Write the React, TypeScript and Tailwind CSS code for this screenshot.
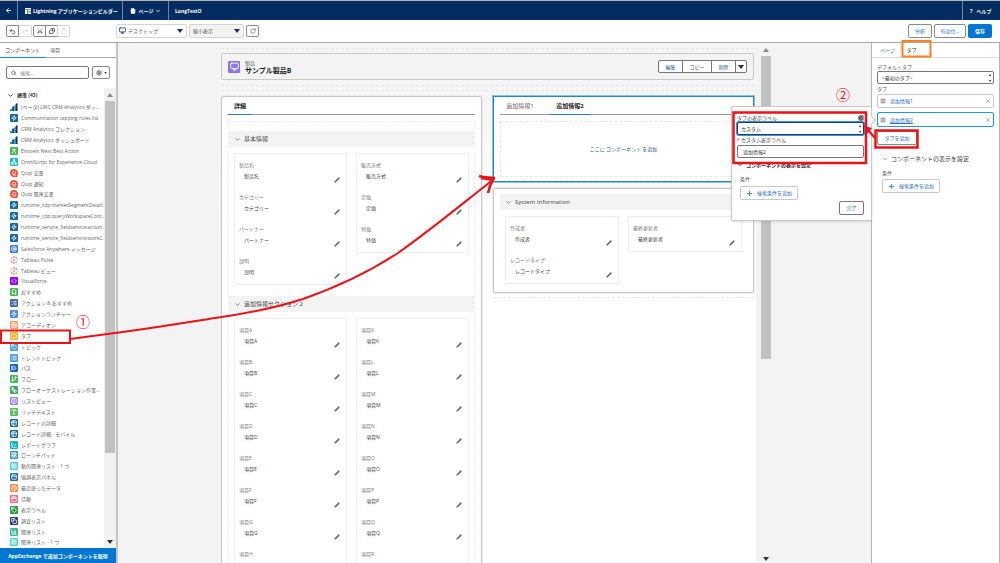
import type { ReactNode } from 'react';
import {
  ArrowLeft,
  AtSign,
  BarChart3,
  Bookmark,
  Calendar,
  ChevronDown,
  Clipboard,
  Clock,
  Code,
  Columns2,
  Copy,
  FileText,
  Folder,
  GitBranch,
  Info,
  LayoutGrid,
  LayoutList,
  LineChart,
  List,
  ListChecks,
  Menu,
  Monitor,
  Network,
  PanelTop,
  Pencil,
  Plus,
  Redo2,
  RotateCw,
  Rows3,
  Scissors,
  Search,
  Settings,
  StepForward,
  Table2,
  Tag,
  Type,
  Undo2,
  User,
  Workflow,
  X,
  Zap,
  type LucideIcon,
} from 'lucide-react';

type Component = {
  label: string;
  color: string;
  icon?: LucideIcon;
  shape?: 'bars' | 'quip' | 'tableau';
};

const components: Component[] = [
  { label: '(ベータ) LWC CRM Analytics ダッ...', color: '', shape: 'bars' },
  { label: 'Communication capping rules list', color: 'bg-[#16699c]', icon: Zap },
  { label: 'CRM Analytics コレクション', color: '', shape: 'bars' },
  { label: 'CRM Analytics ダッシュボード', color: '', shape: 'bars' },
  { label: 'Einstein Next Best Action', color: 'bg-[#4bb35b]', icon: User },
  { label: 'OmniScript for Experience Cloud', color: 'bg-[#20b8cf]', icon: Network },
  { label: 'Quip 文書', color: '', shape: 'quip' },
  { label: 'Quip 通知', color: '', shape: 'quip' },
  { label: 'Quip 関連文書', color: '', shape: 'quip' },
  { label: 'runtime_cdp:marketSegmentDetail...', color: 'bg-[#16699c]', icon: Zap },
  { label: 'runtime_cdp:queryWorkspaceCont...', color: 'bg-[#16699c]', icon: Zap },
  { label: 'runtime_service_fieldservice:action...', color: 'bg-[#16699c]', icon: Zap },
  { label: 'runtime_service_fieldservice:workC...', color: 'bg-[#16699c]', icon: Zap },
  { label: 'Salesforce Anywhere メッセージ', color: 'bg-[#3f7fe0]', icon: AtSign },
  { label: 'Tableau Pulse', color: '', shape: 'tableau' },
  { label: 'Tableau ビュー', color: '', shape: 'tableau' },
  { label: 'Visualforce', color: 'bg-[#9209f0]', icon: Code },
  { label: 'おすすめ', color: 'bg-[#4bb35b]', icon: Bookmark },
  { label: 'アクション & おすすめ', color: 'bg-[#4a66a0]', icon: ListChecks },
  { label: 'アクションランチャー', color: 'bg-[#4f8ee0]', icon: Zap },
  { label: 'アコーディオン', color: 'bg-[#fb9a5c]', icon: Rows3 },
  { label: 'タブ', color: 'bg-[#f7ac2c]', icon: Folder },
  { label: 'トピック', color: 'bg-[#4a9fd8]', icon: Tag },
  { label: 'トレンドトピック', color: 'bg-[#4a9fd8]', icon: List },
  { label: 'パス', color: 'bg-[#0b66c5]', icon: StepForward },
  { label: 'フロー', color: 'bg-[#4bb35b]', icon: GitBranch },
  { label: 'フローオーケストレーション作業...', color: 'bg-[#3fa862]', icon: Workflow },
  { label: 'リストビュー', color: 'bg-[#8f86e8]', icon: Columns2 },
  { label: 'リッチテキスト', color: 'bg-[#5bbd5f]', icon: Type },
  { label: 'レコードの詳細', color: 'bg-[#16699c]', icon: Table2 },
  { label: 'レコード詳細 - モバイル', color: 'bg-[#16699c]', icon: Table2 },
  { label: 'レポートグラフ', color: 'bg-[#12b5bb]', icon: LineChart },
  { label: 'ローンチパッド', color: 'bg-[#3a8ee0]', icon: LayoutGrid },
  { label: '動的関連リスト - 1 つ', color: 'bg-[#4dd0d8]', icon: LayoutList },
  { label: '強調表示パネル', color: 'bg-[#1f6fa5]', icon: PanelTop },
  { label: '最近使ったデータ', color: 'bg-[#fb8f45]', icon: Clock },
  { label: '活動', color: 'bg-[#ee6a88]', icon: Calendar },
  { label: '表示ラベル', color: 'bg-[#2a9d4a]', icon: Tag },
  { label: '調査リスト', color: 'bg-[#2f4069]', icon: Copy },
  { label: '関連リスト', color: 'bg-[#3fb59a]', icon: BarChart3 },
  { label: '関連リスト - 1 つ', color: 'bg-[#4dd0d8]', icon: LayoutList },
];

const basicLeft = ['製品名', 'カテゴリー', 'パートナー', '説明'];
const basicRight = ['販売方式', '定価', '特価'];
const extraLeft = ['項目A', '項目B', '項目C', '項目D', '項目E', '項目F', '項目G'];
const extraRight = ['項目K', '項目L', '項目M', '項目N', '項目O', '項目P', '項目Q'];

function ComponentIcon({ item }: { item: Component }) {
  if (item.shape === 'bars') {
    return (
      <svg viewBox="0 0 8 8" className="size-2 shrink-0">
        <path d="M0 6h2v2H0z" fill="#1a9bd7" />
        <path d="M2 4l2-1v5H2z" fill="#0d5c9c" />
        <path d="M4.300 2.500h1.300V8H4.300z" fill="#1577b8" />
        <path d="M5.600 1l1.900-1v8H5.600z" fill="#0b2f66" />
      </svg>
    );
  }
  if (item.shape === 'quip') {
    return (
      <svg viewBox="0 0 8 8" className="size-2 shrink-0">
        <path d="M4 0a4 4 0 1 0 0 8h3.500V6A4 4 0 0 0 4 0z" fill="#f0523a" />
        <path d="M2.300 5V4a1.700 1.700 0 0 1 3.400 0v1zM3 6.200h2.800" fill="none" stroke="#fff" strokeWidth=".7" />
      </svg>
    );
  }
  if (item.shape === 'tableau') {
    return (
      <svg viewBox="0 0 8 8" className="size-2 shrink-0" fill="none" strokeWidth=".7">
        <path d="M4 2.800v2.400M2.800 4h2.400" stroke="#e8762c" />
        <path d="M4 .2v1.600M3.200 1h1.600M6.200 1.200v1.600M5.400 2h1.600" stroke="#6b84a8" />
        <path d="M1.800 1.200v1.600M1 2h1.600M6.200 5.200v1.600M5.400 6h1.600" stroke="#e39a4c" />
        <path d="M4 6.200v1.600M3.200 7h1.600M1.800 5.200v1.600M1 6h1.600" stroke="#c0698c" />
        <path d="M.5 3.500v1M7.500 3.500v1" stroke="#8193b5" />
      </svg>
    );
  }
  const Icon = item.icon!;
  return (
    <span className={`flex size-2 shrink-0 items-center justify-center rounded-[1px] text-white ${item.color}`}>
      <Icon size={6} strokeWidth={3} />
    </span>
  );
}

function Triangle({ up = false, className }: { up?: boolean; className: string }) {
  return (
    <svg viewBox="0 0 6 4" className={`h-1 w-1.5 ${className}`} fill="currentColor">
      <path d={up ? 'M3 0l3 4H0z' : 'M3 4L0 0h6z'} />
    </svg>
  );
}

function Stepper() {
  return (
    <svg viewBox="0 0 4 8" className="pointer-events-none absolute top-1/2 right-0.5 h-2 w-1 -translate-y-1/2 text-[#444]" fill="currentColor">
      <path d="M2 0l1.300 2H.7zM2 8L.7 6h2.600z" />
    </svg>
  );
}

function Field({ name }: { name: string }) {
  return (
    <div className="flex h-8 items-start justify-between pt-1.5 pr-1.5 pl-1">
      <dl>
        <dt className="leading-[8px] text-[#777]">{name}</dt>
        <dd className="mt-[3px] pl-[5px] leading-[8px] text-[#444]">{name}</dd>
      </dl>
      <button aria-label={`${name}を編集`} className="mt-4 text-[#666]">
        <Pencil size={6} fill="currentColor" strokeWidth={1} />
      </button>
    </div>
  );
}

function FieldCard({ fields, next }: { fields: string[]; next?: string }) {
  return (
    <div className="flex-1 self-start border border-[#e8eef2] bg-white py-px">
      {fields.map((name) => (
        <Field key={name} name={name} />
      ))}
      {next && <div className="h-8 pt-1.5 pl-1 text-[#777]">{next}</div>}
    </div>
  );
}

type SectionProps = { title: string; left: string[]; right: string[]; nextLeft?: string; nextRight?: string };

function Section({ title, left, right, nextLeft, nextRight }: SectionProps) {
  return (
    <section>
      <h2 className="flex h-4 items-center gap-[3px] bg-[#f3f3f3] pl-[5px] text-[6px] text-[#444]">
        <ChevronDown size={7} />
        {title}
      </h2>
      <div className="flex gap-[9px] px-[5px] pt-1.5">
        <FieldCard fields={left} next={nextLeft} />
        <FieldCard fields={right} next={nextRight} />
      </div>
    </section>
  );
}

function ToolButton({ label, muted = false, className = '', children }: { label: string; muted?: boolean; className?: string; children: ReactNode }) {
  return (
    <button
      aria-label={label}
      className={`flex h-3 w-[13px] items-center justify-center border ${muted ? 'border-[#d5d5d5] text-[#c9c9c9]' : 'border-[#8a8a8a] text-[#444]'} ${className}`}
    >
      {children}
    </button>
  );
}

function AddFilterButton() {
  return (
    <button className="flex h-3.5 w-[58px] items-center justify-center gap-1 rounded-[2px] border border-[#c9c9c9] bg-white text-[#2a6fc4]">
      <Plus size={7} strokeWidth={4} className="text-[#3a93dd]" />
      検索条件を追加
    </button>
  );
}

function Header() {
  return (
    <header className="flex h-5 shrink-0 items-stretch border-t border-[#b5b5b5] bg-[#032d60] font-bold text-white">
      <a href="#back" aria-label="戻る" className="flex w-[18px] items-center justify-center border-r border-[#6f86a5]">
        <ArrowLeft size={7} strokeWidth={3} />
      </a>
      <div className="flex w-[105px] items-center gap-0.5 border-r border-[#6f86a5] pl-[7px] whitespace-nowrap">
        <svg viewBox="0 0 6 6" className="size-1.5" fill="#fff">
          <path d="M0 0h6v1.400H0zM0 2h2.400v4H0zM3 2h3v1.600H3zM3 4.200h3V6H3z" />
        </svg>
        Lightning アプリケーションビルダー
      </div>
      <button className="flex w-[46px] items-center justify-center gap-0.5 border-r border-[#6f86a5]">
        <FileText size={6} fill="#fff" />
        <span className="ml-px">ページ</span>
        <ChevronDown size={6} strokeWidth={3} />
      </button>
      <div className="flex flex-1 items-center pl-1.5">LongTestO</div>
      <a href="#help" className="flex w-[38px] items-center gap-1 border-l border-[#6f86a5] pl-[7px]">
        <span>?</span>
        <span>ヘルプ</span>
      </a>
    </header>
  );
}

function Toolbar() {
  return (
    <div className="flex h-[23px] shrink-0 items-center border-b border-[#a8a8a8] bg-white pr-2 pl-1.5">
      <div className="flex w-[110px] gap-px">
        <div className="flex">
          <ToolButton label="元に戻す" className="rounded-l-[2px]"><Undo2 size={7} strokeWidth={2.500} /></ToolButton>
          <ToolButton label="やり直す" muted className="rounded-r-[2px] border-l-0"><Redo2 size={7} /></ToolButton>
        </div>
        <div className="flex">
          <ToolButton label="切り取り" className="rounded-l-[2px]"><Scissors size={6} className="-rotate-90" /></ToolButton>
          <ToolButton label="コピー" className="-ml-px"><Copy size={6} strokeWidth={3} className="-scale-x-100" /></ToolButton>
          <ToolButton label="貼り付け" muted className="-ml-px rounded-r-[2px]"><Clipboard size={6} /></ToolButton>
        </div>
      </div>
      <div className="flex flex-1 items-center gap-0.5">
        <div className="relative">
          <Monitor size={7} strokeWidth={3} className="pointer-events-none absolute top-[3px] left-[3px] text-[#1c4a80]" />
          <select aria-label="デバイス" className="h-3.5 w-[71px] appearance-none rounded-[2px] border border-[#d5d5d5] bg-white pl-[11px] text-[#555]">
            <option>デスクトップ</option>
          </select>
          <Triangle className="pointer-events-none absolute top-[5px] right-1 text-[#16325c]" />
        </div>
        <div className="relative">
          <select aria-label="表示倍率" className="h-3.5 w-[55px] appearance-none rounded-[2px] border border-[#d5d5d5] bg-[#f3f3f3] pl-[3px] text-[#555]">
            <option>縮小表示</option>
          </select>
          <Triangle className="pointer-events-none absolute top-[5px] right-1 text-[#16325c]" />
        </div>
        <ToolButton label="更新" className="rounded-[2px]"><RotateCw size={6} /></ToolButton>
      </div>
      <div className="flex gap-0.5">
        <button className="h-3.5 w-6 rounded-[2px] border border-[#8a8a8a] text-[#2a6fc4]">分析</button>
        <button className="h-3.5 w-8 rounded-[2px] border border-[#8a8a8a] text-[#2a6fc4]">有効化...</button>
        <button className="h-3.5 w-6 rounded-[2px] bg-[#0176d3] font-bold text-white">保存</button>
      </div>
    </div>
  );
}

function Sidebar() {
  return (
    <aside className="flex w-[118px] shrink-0 flex-col border-r-2 border-[#c4c4c4] bg-white">
      <div className="flex h-[15px] shrink-0 border-b border-[#a8a8a8]">
        <button className="-mb-px w-[45px] border-b border-[#1b8ae6] text-[#444]">コンポーネント</button>
        <button className="ml-[5px] text-[#555]">項目</button>
      </div>
      <div className="flex shrink-0 items-center gap-[3px] px-1.5 pt-2 pb-[9px]">
        <label className="flex h-[13px] flex-1 items-center gap-1 rounded-[2px] border border-[#777] pl-1 text-[#555]">
          <Search size={6} strokeWidth={3} />
          <input aria-label="コンポーネントを検索" placeholder="検索..." className="w-full min-w-0 outline-none placeholder:text-[#888]" />
        </label>
        <button aria-label="設定" className="flex h-[13px] w-[18px] items-center justify-center gap-0.5 rounded-[2px] border border-[#8a8a8a] text-[#444]">
          <Settings size={6} strokeWidth={3} />
          <svg viewBox="0 0 4 3" className="h-0.5 w-[3px]" fill="currentColor"><path d="M0 0h4L2 3z" /></svg>
        </button>
      </div>
      <div className="flex min-h-0 flex-1">
        <div className="flex min-w-0 flex-1 flex-col">
          <h2 className="flex h-3.5 shrink-0 items-center gap-[3px] pl-[7px] font-bold text-[#333]">
            <ChevronDown size={7} strokeWidth={3} className="text-[#16325c]" />
            標準 (43)
          </h2>
          <ul className="flex min-h-0 flex-1 flex-col">
            {components.map((item) => (
              <li key={item.label} className="flex min-h-0 flex-1 items-center gap-[3px] pl-2.5 leading-[8px] whitespace-nowrap text-[#666]">
                <ComponentIcon item={item} />
                {item.label}
              </li>
            ))}
          </ul>
        </div>
        <div className="relative z-10 flex w-3 shrink-0 flex-col items-center bg-[#f1f1f1] pt-[5px] pb-1">
          <Triangle up className="text-[#8a8a8a]" />
          <div className="my-1 flex min-h-0 w-2.5 flex-1 flex-col">
            <div className="h-[81%] bg-[#c1c1c1]" />
          </div>
          <Triangle className="text-[#333]" />
        </div>
      </div>
      <button className="h-[15px] shrink-0 bg-[#0176d3] font-bold whitespace-nowrap text-white">AppExchange で追加コンポーネントを取得</button>
    </aside>
  );
}

function Canvas() {
  return (
    <main className="flex min-w-0 flex-1 bg-[#f3f3f3] pr-[99px] pl-[101px]">
      <div className="min-w-0 flex-1 overflow-hidden bg-linear-to-b from-[#f3f3f3] to-white to-40% px-0.5 pt-[5px]">
        <div className="border-y border-dashed border-[#e6e6e6] pt-1 pb-[5px]">
          <div className="flex h-[27px] items-center rounded-[2px] border border-[#c9c9c9] bg-[#f3f3f3] px-1.5">
            <span className="flex size-3 items-center justify-center rounded-[1px] bg-[#8a75ea] text-white">
              <Monitor size={9} strokeWidth={2.500} />
            </span>
            <div className="flex-1 pl-[5px]">
              <div className="leading-[8px] text-[#555]">製品</div>
              <h1 className="text-[7px] leading-[8px] font-bold text-[#222]">サンプル製品B</h1>
            </div>
            <div className="flex h-[13px] divide-x divide-[#777] rounded-[2px] border border-[#777] bg-white text-[#2a5c94]">
              <button className="w-6">編集</button>
              <button className="w-[29px]">コピー</button>
              <button className="w-6">削除</button>
              <button aria-label="その他" className="flex w-2.5 items-center justify-center">
                <Triangle className="text-[#16325c]" />
              </button>
            </div>
          </div>
        </div>

        <div className="mt-1 grid grid-cols-2 items-start gap-[11px] border-t border-dashed border-[#e6e6e6] pt-[5px]">
          <div className="rounded-t-[2px] border border-[#c9c9c9] bg-white px-1.5 shadow-[0_0_0_1px_#ececec]">
            <div className="flex h-[18px] border-b border-[#999] text-[6px]">
              <button className="-mb-px w-6 border-b border-[#2a78c8] font-bold text-[#222]">詳細</button>
            </div>
            <div className="mt-1.5 border border-dashed border-[#e8eef2] pt-[9px]">
              <Section title="基本情報" left={basicLeft} right={basicRight} />
              <div className="pt-[11px]">
                <Section title="追加情報セクション 2" left={extraLeft} right={extraRight} nextLeft="項目H" nextRight="項目R" />
              </div>
            </div>
          </div>

          <div className="min-w-0">
            <div className="border border-[#1f86cf] bg-white px-1.5 pb-1 shadow-[0_0_0_1px_#8cc0e8]">
              <div className="flex h-[18px] gap-2.5 border-b border-[#999] text-[6px]">
                <button className="w-10 text-[#666]">追加情報1</button>
                <button className="-mb-px w-10 border-b border-[#2a78c8] font-bold text-[#222]">追加情報2</button>
              </div>
              <div className="mt-1.5 flex h-14 items-center justify-center border border-dashed border-[#dfe6ea] text-[#2a5c94]">
                ここに コンポーネント を追加
              </div>
            </div>
            <div className="mt-1.5 rounded-[2px] border border-[#c9c9c9] bg-white px-1.5 pt-[5px] pb-2 shadow-[0_0_0_1px_#ececec]">
              <Section title="System Information" left={['作成者', 'レコードタイプ']} right={['最終更新者']} />
            </div>
            <div className="mt-1 border-b border-dashed border-[#e6e6e6]" />
          </div>
        </div>
      </div>
      <div className="ml-1 flex w-3 shrink-0 flex-col items-center bg-[#f3f3f3] pt-[5px] pb-0.5">
        <Triangle up className="text-[#8a8a8a]" />
        <div className="my-1 flex min-h-0 w-2.5 flex-1 flex-col">
          <div className="h-[61%] bg-[#c1c1c1]" />
        </div>
        <Triangle className="text-[#333]" />
      </div>
    </main>
  );
}

// Popover that opens to the left of the selected tab
function TabPopover() {
  return (
    <div className="absolute -top-[7px] right-full mr-1.5 h-[115px] w-[141px] rounded-[2px] border border-[#c9c9c9] bg-white pt-1.5 pr-[7px] pl-[5px] shadow-sm">
      <div className="flex h-[9px] items-center justify-between">
        <label htmlFor="tab-label" className="leading-[8px] text-[#444]">タブの表示ラベル</label>
        <Info size={6} fill="#444" stroke="#fff" className="rounded-full bg-[#444]" />
      </div>
      <div className="relative">
        <select id="tab-label" className="block h-[13px] w-full appearance-none rounded-[2px] border border-[#16407a] bg-white pl-[3px] text-[#333] shadow-[0_0_0_1px_#3f8fd6]">
          <option>カスタム</option>
        </select>
        <Stepper />
      </div>
      <label htmlFor="custom-label" className="block h-2.5 leading-[10px] text-[#444]">
        <span className="text-[#d33]">*</span> カスタム表示ラベル
      </label>
      <input id="custom-label" defaultValue="追加情報2" className="block h-[13px] w-full rounded-[2px] border border-[#777] pl-[5px] text-[#333]" />
      <h3 className="mt-[3px] flex h-2 items-center gap-[3px] font-bold text-[#222]">
        <ChevronDown size={6} strokeWidth={3} />
        コンポーネントの表示を設定
      </h3>
      <div className="pl-[3px]">
        <div className="mt-1.5 mb-[3px] leading-[8px] text-[#555]">条件</div>
        <AddFilterButton />
      </div>
      <div className="mt-px flex justify-end">
        <button className="h-3.5 w-[25px] rounded-[2px] border border-[#777] text-[#2a6fc4]">完了</button>
      </div>
      <span className="absolute top-2.5 -right-1 size-1.5 rotate-45 border-t border-r border-[#c9c9c9] bg-white" />
    </div>
  );
}

function Properties() {
  return (
    <aside className="w-[129px] shrink-0 border-x border-[#b5b5b5] bg-white">
      <nav className="flex h-[15px] items-center border-b border-[#dcdcdc] pl-2">
        <a href="#page" className="text-[#2a6fc4]">ページ</a>
        <span className="pl-1.5 text-[#777]">›</span>
        <span className="pl-1 text-[#333]">タブ</span>
      </nav>
      <div className="px-[5px] pt-[5px]">
        <label htmlFor="default-tab" className="block leading-[8px] text-[#555]">デフォルトタブ</label>
        <div className="relative">
          <select id="default-tab" className="block h-[13px] w-full appearance-none rounded-[2px] border border-[#777] bg-white pl-1 text-[#333]">
            <option>&lt;最初のタブ&gt;</option>
          </select>
          <Stepper />
        </div>
        <div className="pt-px leading-[9px] text-[#555]">タブ</div>
        <ul>
          <li className="flex h-3.5 items-center gap-1 rounded-[2px] border border-[#c9c9c9] px-0.5">
            <Menu size={6} strokeWidth={3} className="text-[#555]" />
            <a href="#tab-1" className="flex-1 text-[#2a6fc4]">追加情報1</a>
            <button aria-label="追加情報1を削除" className="text-[#777]"><X size={6} /></button>
          </li>
          <li className="relative mt-1 flex h-[15px] items-center gap-1 rounded-[2px] border border-[#1b96ff] px-0.5">
            <Menu size={6} strokeWidth={3} className="text-[#555]" />
            <span className="flex-1"><a href="#tab-2" className="text-[#2a6fc4] underline">追加情報2</a></span>
            <button aria-label="追加情報2を削除" className="text-[#777]"><X size={6} /></button>
            <TabPopover />
          </li>
        </ul>
        <button className="mt-1 block h-3.5 w-10 rounded-[2px] border border-[#8a8a8a] text-[#2a6fc4]">タブを追加</button>
        <div className="pl-[5px]">
          <h2 className="mt-[9px] flex h-2.5 items-center gap-[3px] text-[6px] whitespace-nowrap text-[#444]">
            <ChevronDown size={6} />
            コンポーネントの表示を設定
          </h2>
          <div className="mt-[5px] mb-0.5 leading-[8px] text-[#555]">条件</div>
          <AddFilterButton />
        </div>
      </div>
    </aside>
  );
}

function Annotations() {
  return (
    <svg viewBox="0 0 1000 563" preserveAspectRatio="none" className="pointer-events-none absolute inset-0 z-20 h-full w-full" fill="none" stroke="#ec1218" strokeWidth="2">
      <rect x="1" y="330.500" width="69" height="12.500" />
      <path d="M70 339L130 331C160 327 190 322 215 318C250 313 275 308 303 299C340 286 372 270 398 253C432 229 462 204 494 179" />
      <path d="M479 176C484 178 489 177 495 178M488 193C489 188 491 183 494 178M481 178L494 180" strokeWidth="2.500" />
      <rect x="733.500" y="112.500" width="132.500" height="50.500" strokeWidth="2.500" />
      <rect x="875.500" y="130.500" width="42" height="17" strokeWidth="2.500" />
      <path d="M875 138L868 130" />
      <path d="M864 126L872 128L867 134Z" fill="#ec1218" stroke="none" />
      <rect x="902.500" y="41" width="28" height="15.500" stroke="#ff7f1f" />
      <g fill="#ec1218" stroke="none" fontSize="14">
        <text x="76" y="327">①</text>
        <text x="836" y="100">②</text>
      </g>
    </svg>
  );
}

export default function App() {
  return (
    <div className="relative flex h-screen flex-col overflow-hidden bg-white font-['Open_Sans','Noto_Sans_CJK_JP',sans-serif] text-[5px] leading-[8px]">
      <Header />
      <Toolbar />
      <div className="flex min-h-0 flex-1">
        <Sidebar />
        <Canvas />
        <Properties />
      </div>
      <Annotations />
    </div>
  );
}
